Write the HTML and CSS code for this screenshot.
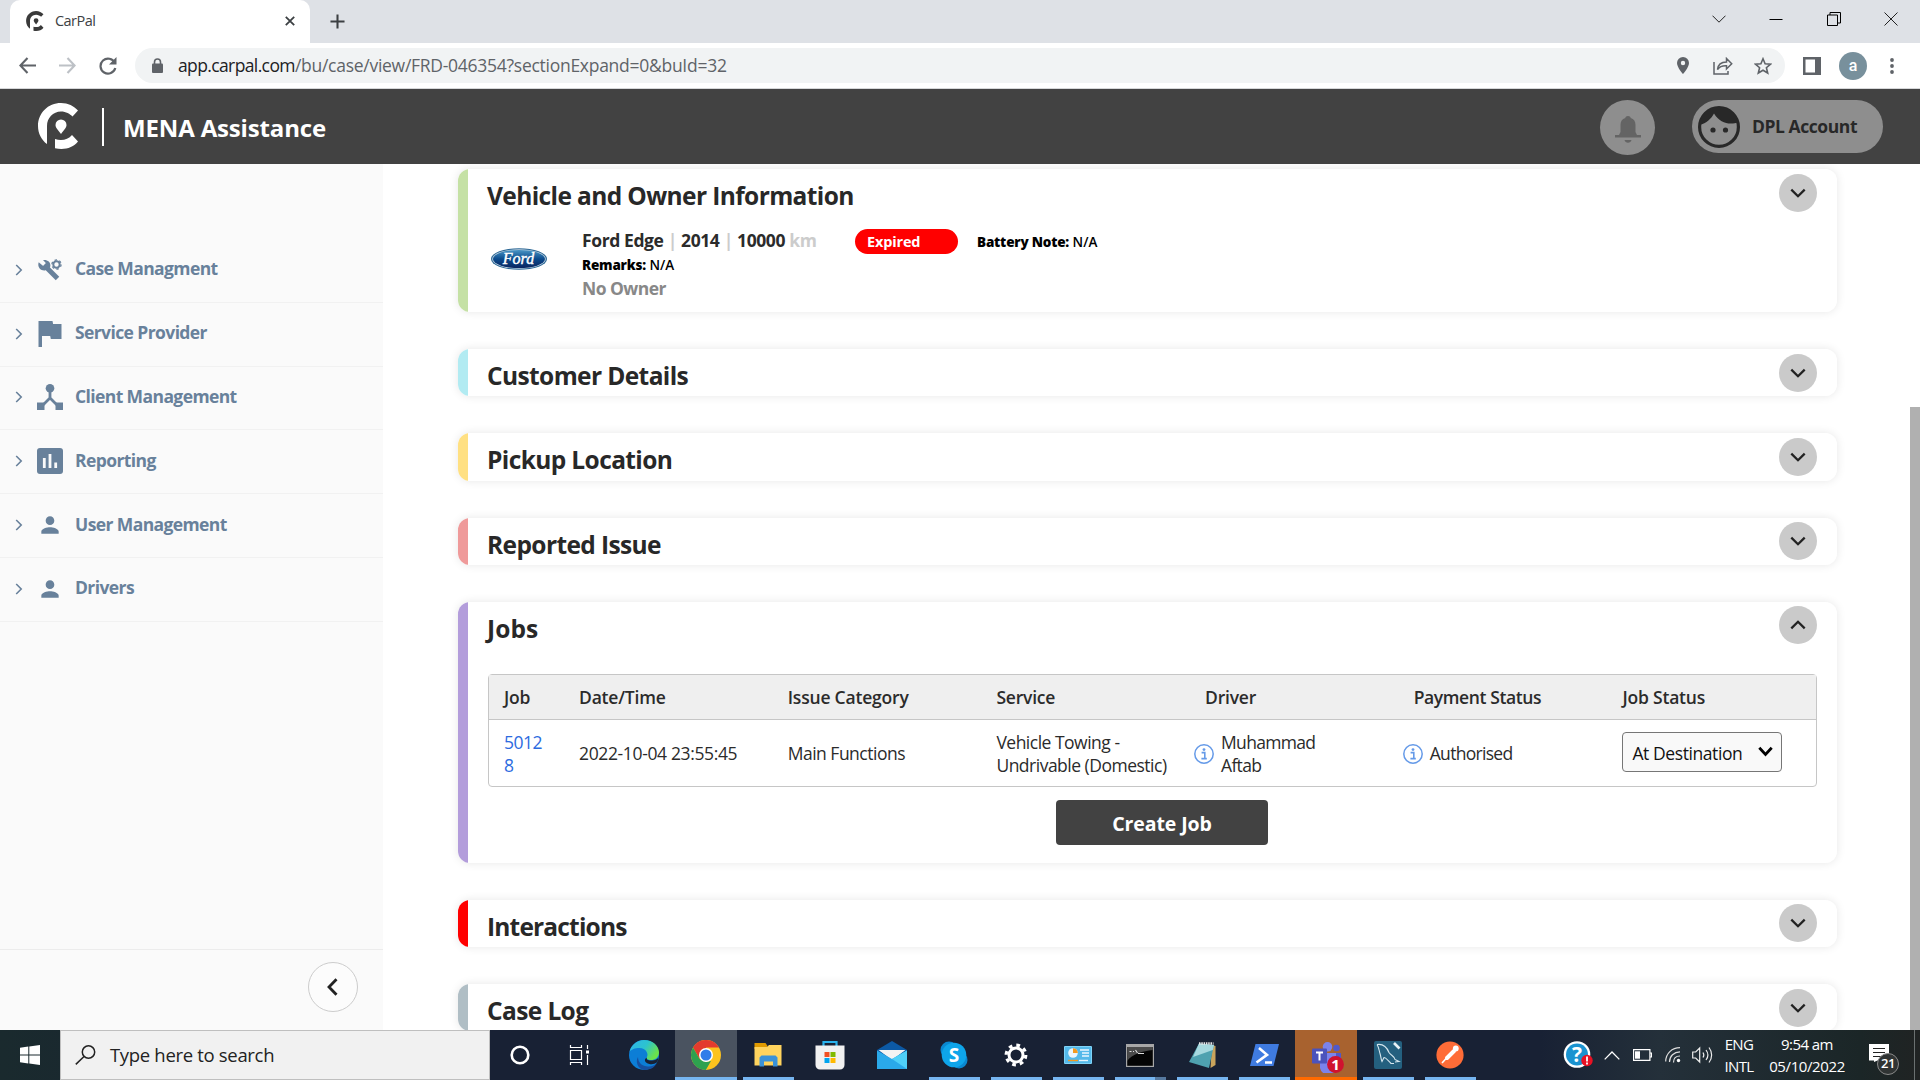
FILE: index.html
```html
<!DOCTYPE html>
<html lang="en">
<head>
<meta charset="utf-8">
<title>CarPal</title>
<link rel="stylesheet" href="styles.css">
</head>
<body>
<svg width="0" height="0" class="defs">
  <symbol id="chev-right" viewBox="0 0 8 12"><path d="M1.2 1l5 5-5 5" fill="none" stroke="currentColor" stroke-width="1.6"/></symbol>
  <symbol id="chev-down" viewBox="0 0 16 10"><path d="M1.3 1.6L8 8.2l6.700-6.600" fill="none" stroke="currentColor" stroke-width="2.300"/></symbol>
  <symbol id="person" viewBox="0 0 24 24"><path fill="currentColor" d="M12 12c2.210 0 4-1.790 4-4s-1.790-4-4-4-4 1.790-4 4 1.790 4 4 4zm0 2c-2.670 0-8 1.340-8 4v2h16v-2c0-2.660-5.330-4-8-4z"/></symbol>
  <symbol id="info" viewBox="0 0 20 20"><circle cx="10" cy="10" r="9.200" fill="none" stroke="currentColor" stroke-width="1.500"/><circle cx="10" cy="5.600" r="1.400" fill="currentColor"/><path d="M7.600 8.600h3.200v5.600M7.400 14.600h5.400" fill="none" stroke="currentColor" stroke-width="1.600"/></symbol>
  <symbol id="carpal" viewBox="0 0 41 46"><path fill="currentColor" d="M9 41C3.500 37 0 30.500 0 23 0 10 10 0 23 0c7 0 13 3 17 7.500l-5.500 6C32 11 28 8.500 23 8.500 15 8.500 9 15 9 23z"/><path fill="currentColor" d="M17 36c6 2.200 13 1 17-4l6 6.500C35 45 26 47.300 17 45.200z"/><path fill="currentColor" d="M23 31c-3-4-5.500-6.500-5.500-9a5.500 5.500 0 0 1 11 0c0 2.500-2.500 5-5.500 9z"/></symbol>
</svg>

<div class="tabstrip">
  <div class="tab">
    <svg class="tab-logo" viewBox="0 0 41 46"><use href="#carpal"/></svg>
    <span class="tab-title">CarPal</span>
    <svg class="tab-close" viewBox="0 0 10 10"><path d="M.8.8l8.400 8.400M9.200.8L.8 9.200" stroke="#3c4043" stroke-width="1.800"/></svg>
  </div>
  <svg class="newtab" viewBox="0 0 16 16"><path d="M8 .5v15M.5 8h15" stroke="#3c4043" stroke-width="2.200"/></svg>
  <div class="winctl">
    <svg width="14" height="8" viewBox="0 0 14 8"><path d="M.5.7L7 7.200 13.500.7" fill="none" stroke="#222"/></svg>
    <svg width="14" height="14" viewBox="0 0 14 14"><path d="M.5 7.500h13" stroke="#000"/></svg>
    <svg width="14" height="14" viewBox="0 0 14 14"><path d="M.5 3h10v10.500H.5zM3 3V.5h10.500V11h-3" fill="none" stroke="#000"/></svg>
    <svg width="14" height="14" viewBox="0 0 14 14"><path d="M.5.5l13 13M13.500.5l-13 13" stroke="#222"/></svg>
  </div>
</div>

<div class="toolbar">
  <svg class="nav-back" viewBox="0 0 16 16"><path d="M16 8H1.500M8 1L1.300 8 8 15" fill="none" stroke="#5f6368" stroke-width="2"/></svg>
  <svg class="nav-fwd" viewBox="0 0 16 16"><path d="M0 8h14.500M8 1l6.700 7L8 15" fill="none" stroke="#bdc1c6" stroke-width="2"/></svg>
  <svg class="nav-reload" viewBox="0 0 18 18"><path d="M15.800 5.800A7.500 7.500 0 1 0 16.300 11" fill="none" stroke="#5f6368" stroke-width="2.200"/><path d="M17.500 0v7.500H10z" fill="#5f6368"/></svg>
  <div class="omnibox">
    <svg class="lock" viewBox="0 0 11 15"><path d="M2.500 6V4a3 3 0 0 1 6 0v2" fill="none" stroke="#5f6368" stroke-width="1.600"/><rect y="5.500" width="11" height="9.500" rx="1" fill="#5f6368"/></svg>
    <span class="url"><b>app.carpal.com</b>/bu/case/view/FRD-046354?sectionExpand=0&amp;buId=32</span>
    <div class="omni-icons">
      <svg width="12" height="17" viewBox="0 0 12 17"><path fill="#5f6368" fill-rule="evenodd" d="M6 0a6 6 0 0 0-6 6c0 4.500 6 11 6 11s6-6.500 6-11a6 6 0 0 0-6-6zm0 3.800a2.200 2.200 0 1 1 0 4.400 2.200 2.200 0 0 1 0-4.400z"/></svg>
      <svg width="20" height="18" viewBox="0 0 20 18"><path d="M1 5v12h14v-3M4.500 12.500c.5-5 4-7.500 9-7.500V1.500L18.700 6.800l-5.200 5.200V8.700c-4-.2-7 .8-9 3.800z" fill="none" stroke="#5f6368" stroke-width="1.500"/></svg>
      <svg width="18" height="18" viewBox="0 0 18 18"><path d="M9 1.800l2.100 5 5.400.4-4.100 3.500 1.300 5.300L9 13.200 4.300 16l1.300-5.300L1.500 7.200l5.400-.4z" fill="none" stroke="#5f6368" stroke-width="1.600"/></svg>
    </div>
  </div>
  <svg class="panel" viewBox="0 0 18 18"><path fill="#5f6368" fill-rule="evenodd" d="M0 0h18v18H0zM2.500 2.500v13h9.500v-13z"/></svg>
  <div class="avatar">a</div>
  <svg class="menu" viewBox="0 0 4 16"><circle cx="2" cy="2" r="1.900" fill="#5f6368"/><circle cx="2" cy="8" r="1.900" fill="#5f6368"/><circle cx="2" cy="14" r="1.900" fill="#5f6368"/></svg>
</div>

<header class="header">
  <svg class="brand" viewBox="0 0 41 46"><use href="#carpal"/></svg>
  <div class="divider"></div>
  <div class="org">MENA Assistance</div>
  <div class="bell"><svg width="26" height="27" viewBox="0 0 26 27"><path fill="#646464" d="M13 0c-2 0-2.600 1-2.700 2C7 3 5.500 5.500 5.500 9v7L4 19H0v2.500h26V19h-4l-1.500-3V9c0-3.500-1.500-6-4.800-7C15.600 1 15 0 13 0zM9.500 24c.5 1.700 1.800 2.700 3.500 2.700s3-1 3.500-2.700z"/></svg></div>
  <div class="account">
    <svg width="42" height="42" viewBox="0 0 42 42"><circle cx="21" cy="21" r="19.400" fill="none" stroke="#282828" stroke-width="3.200"/><path fill="#282828" d="M1.500 19C2 9 11 1 21 1c9 0 17 6 19.500 15-8 3.500-18.500 1.500-24.500-8.500-2.500 5-7.500 9.700-14.500 11.500z"/><circle cx="15" cy="24" r="2.600" fill="#282828"/><circle cx="27.500" cy="24" r="2.600" fill="#282828"/></svg>
    <span>DPL Account</span>
  </div>
</header>

<div class="app">
  <aside class="sidebar">
    <nav class="nav">
      <a class="item"><svg class="chev"><use href="#chev-right"/></svg><span class="ico"><svg width="24" height="22" viewBox="0 0 24 22"><path d="M6 6l13.500 13.500" stroke="#68819b" stroke-width="5"/><path fill="#68819b" d="M.7 3.200C-.8 7.500 2 12 7 11.500L12 8.500C13.500 4 10.500.3 5 1l3 3.200L5.500 7.300z"/><circle cx="18.500" cy="5.500" r="3.200" fill="none" stroke="#68819b" stroke-width="2"/><circle cx="18.500" cy="5.500" r="4.600" fill="none" stroke="#68819b" stroke-width="1.300" stroke-dasharray="2.400 2.400"/></svg></span><span class="label">Case Managment</span></a>
      <a class="item"><svg class="chev"><use href="#chev-right"/></svg><span class="ico"><svg width="24" height="26" viewBox="0 0 24 26"><path fill="#68819b" d="M.5 0h14l.6 3h8.400v15H12.800l-.6-3H4v11H.5z"/></svg></span><span class="label">Service Provider</span></a>
      <a class="item"><svg class="chev"><use href="#chev-right"/></svg><span class="ico"><svg width="26" height="26" viewBox="0 0 26 26"><circle cx="13" cy="4.300" r="4.300" fill="#68819b"/><path d="M13 7v7L4 23M13 14l9 9" fill="none" stroke="#68819b" stroke-width="2.800"/><path fill="#68819b" d="M0 18.500h7.500V26H0zM18.500 18.500H26V26h-7.500z"/></svg></span><span class="label">Client Management</span></a>
      <a class="item"><svg class="chev"><use href="#chev-right"/></svg><span class="ico"><svg width="26" height="26" viewBox="0 0 26 26"><rect width="26" height="26" rx="3" fill="#68819b"/><path d="M7.300 10v10M13 6v14M18.700 14.500V20" stroke="#fafafa" stroke-width="2.800"/></svg></span><span class="label">Reporting</span></a>
      <a class="item"><svg class="chev"><use href="#chev-right"/></svg><span class="ico"><svg width="26" height="26"><use href="#person"/></svg></span><span class="label">User Management</span></a>
      <a class="item"><svg class="chev"><use href="#chev-right"/></svg><span class="ico"><svg width="26" height="26"><use href="#person"/></svg></span><span class="label">Drivers</span></a>
    </nav>
    <div class="sidefoot"><div class="collapse"><svg width="11" height="18" viewBox="0 0 11 18"><path d="M9.500 1.200L2 9l7.500 7.800" fill="none" stroke="#222" stroke-width="2.800"/></svg></div></div>
  </aside>

  <main class="content">
    <section class="card green">
      <div class="head"><h2>Vehicle and Owner Information</h2><button class="toggle"><svg><use href="#chev-down"/></svg></button></div>
      <div class="vehicle">
        <svg class="ford" viewBox="0 0 56 22">
          <defs><linearGradient id="fg" x1="0" y1="0" x2="0" y2="1"><stop offset="0" stop-color="#4b97c6"/><stop offset=".5" stop-color="#0b4a8c"/><stop offset="1" stop-color="#0a2560"/></linearGradient></defs>
          <ellipse cx="28" cy="11" rx="28" ry="10.800" fill="#2b6795"/><ellipse cx="28" cy="11" rx="26.800" ry="9.800" fill="#c3d4e2"/><ellipse cx="28" cy="11" rx="26" ry="9.100" fill="url(#fg)"/>
          <text x="27.500" y="16" text-anchor="middle" class="ford-text">Ford</text>
        </svg>
        <div class="vinfo">
          <div class="model">Ford Edge <i>|</i> 2014 <i>|</i> 10000 <i>km</i></div>
          <div class="small"><b>Remarks:</b> N/A</div>
          <div class="owner">No Owner</div>
        </div>
        <div class="pill">Expired</div>
        <div class="small battery"><b>Battery Note:</b> N/A</div>
      </div>
    </section>
    <section class="card cyan"><div class="head"><h2>Customer Details</h2><button class="toggle"><svg><use href="#chev-down"/></svg></button></div></section>
    <section class="card yellow"><div class="head"><h2>Pickup Location</h2><button class="toggle"><svg><use href="#chev-down"/></svg></button></div></section>
    <section class="card pink"><div class="head"><h2>Reported Issue</h2><button class="toggle"><svg><use href="#chev-down"/></svg></button></div></section>
    <section class="card purple">
      <div class="head"><h2 class="loose">Jobs</h2><button class="toggle up"><svg><use href="#chev-down"/></svg></button></div>
      <div class="jobs">
        <div class="row thead"><div>Job</div><div>Date/Time</div><div>Issue Category</div><div>Service</div><div>Driver</div><div class="tight">Payment Status</div><div>Job Status</div></div>
        <div class="row tbody">
          <div class="link">5012<br>8</div><div class="date">2022-10-04 23:55:45</div><div>Main Functions</div><div>Vehicle Towing -<br>Undrivable (Domestic)</div>
          <div class="withinfo"><svg><use href="#info"/></svg><span>Muhammad<br>Aftab</span></div>
          <div class="withinfo"><svg><use href="#info"/></svg><span>Authorised</span></div>
          <div><div class="select"><span>At Destination</span><svg width="15" height="11" viewBox="0 0 15 11"><path d="M1.300 1.800l6.200 6.600 6.200-6.600" fill="none" stroke="#000" stroke-width="2.800"/></svg></div></div>
        </div>
      </div>
      <button class="create">Create Job</button>
    </section>
    <section class="card red"><div class="head"><h2 class="narrow">Interactions</h2><button class="toggle"><svg><use href="#chev-down"/></svg></button></div></section>
    <section class="card slate"><div class="head"><h2>Case Log</h2><button class="toggle"><svg><use href="#chev-down"/></svg></button></div></section>
  </main>
  <div class="scroll"><div class="thumb"></div></div>
</div>

<footer class="taskbar">
  <div class="start"><svg width="20" height="20" viewBox="0 0 20 20"><path fill="#fff" d="M0 2.800L8.300 1.500v8H0zM9.300 1.400L20 0v9.500H9.300zM0 10.500h8.300v8L0 17.300zM9.300 10.500H20V20L9.300 18.600z"/></svg></div>
  <div class="search"><svg width="21" height="20" viewBox="0 0 21 20"><circle cx="13.500" cy="7" r="6.200" fill="none" stroke="#222" stroke-width="1.500"/><path d="M9 11.500L.8 19.400" stroke="#222" stroke-width="1.500"/></svg><span>Type here to search</span></div>
  <div class="cell cortana"><svg width="20" height="20" viewBox="0 0 20 20"><circle cx="10" cy="10" r="8.300" fill="none" stroke="#fff" stroke-width="2.600"/></svg></div>
  <div class="cell taskview"><svg width="21" height="20" viewBox="0 0 21 20"><path d="M1.500 5.500h11v9h-11zM1.500 0v2.500h11V0M1.500 20v-2.500h11V20M18.500 0v4M18.500 10v10" fill="none" stroke="#fff" stroke-width="1.200"/><path fill="#fff" d="M17 5.500h3v3h-3z"/></svg></div>
  <div class="cell"><svg width="30" height="30" viewBox="0 0 30 30"><defs><linearGradient id="eg" x1="0" y1="0" x2="1" y2=".5"><stop offset="0" stop-color="#2fb4ea"/><stop offset=".55" stop-color="#2cc3cf"/><stop offset="1" stop-color="#6be34a"/></linearGradient></defs><circle cx="15" cy="15" r="15" fill="#0c7ed6"/><path fill="url(#eg)" d="M.5 12C2 5 8 0 15 0c9 0 15 6 15 12.500 0 5-4 7.500-8 7.500-3 0-5-1-4.200-2.500C20 14 17 8 10.500 8 6 8 2 9.500.5 12z"/><path fill="#1650a0" d="M9 17c0 6 5 10 11 9.500 3 0 6-1.500 8-3.500-3 5-7 7-13 7-6-1-9-8-6-13z"/><path fill="#182134" d="M18 17.500c-1 1.800 1 3.300 5 3 3 0 5-1 6.500-3L28.500 22c-3 2-5 2.500-8 2-5-1-6-5-2.500-6.500z"/></svg></div>
  <div class="cell active"><svg width="30" height="30" viewBox="0 0 30 30"><circle cx="15" cy="15" r="15" fill="#fcc31e"/><path fill="#e33b2e" d="M2 7.500a15 15 0 0 1 26 0H15v7L8.500 18.700z"/><path fill="#2ea14f" d="M2 7.500l6.500 11.200L15 22l5-1-5.200 9A15 15 0 0 1 2 7.500z"/><circle cx="15" cy="15" r="7" fill="#fff"/><circle cx="15" cy="15" r="5.500" fill="#2f7de9"/></svg></div>
  <div class="cell run"><svg width="28" height="24" viewBox="0 0 28 24"><path fill="#e09a00" d="M.5 0h11l2 3v3H.5z"/><path fill="#ffd45e" d="M.5 4H13l2-2h12.500v20.500H.5z"/><path fill="#3a92d8" d="M5.500 23.500v-9l2-2h14l2 2v9h-4.500v-5h-9v5z"/></svg></div>
  <div class="cell"><svg width="30" height="30" viewBox="0 0 30 30"><path d="M8.500 7V2h13v5" fill="none" stroke="#2ab3ee" stroke-width="2.200"/><path fill="#f1f1f1" d="M.5 5.500h29V25a4.500 4.500 0 0 1-4.500 4.500H5A4.500 4.500 0 0 1 .5 25z"/><path fill="#f25022" d="M9.500 12h5v5h-5z"/><path fill="#7fba00" d="M15.500 12h5v5h-5z"/><path fill="#00a4ef" d="M9.500 18h5v5h-5z"/><path fill="#ffb900" d="M15.500 18h5v5h-5z"/></svg></div>
  <div class="cell"><svg width="30" height="28" viewBox="0 0 30 28"><path fill="#0c59a4" d="M15 0l15 9v9H0V9z"/><path fill="#f3f3f3" d="M1.500 9h27L15 19z"/><path fill="#2aa9ea" d="M0 9.500l15 8.500 15-8.500V28H0z"/><path fill="#4fd0f8" d="M30 9.500V28L15 18z"/></svg></div>
  <div class="cell run"><svg width="28" height="28" viewBox="0 0 28 28"><circle cx="9" cy="9" r="8.500" fill="#0a88d0"/><circle cx="19" cy="19" r="8.500" fill="#0a88d0"/><circle cx="14" cy="14" r="12.300" fill="#0ea5ea"/><text x="14" y="21" text-anchor="middle" class="skype">S</text></svg></div>
  <div class="cell run"><svg width="24" height="24" viewBox="0 0 24 24"><circle cx="12" cy="12" r="7" fill="none" stroke="#fff" stroke-width="3"/><circle cx="12" cy="12" r="9.800" fill="none" stroke="#fff" stroke-width="3.200" stroke-dasharray="3.700 4"/></svg></div>
  <div class="cell run"><svg width="28" height="18" viewBox="0 0 28 18"><rect width="28" height="18" rx="1" fill="#7fd3f7"/><rect x="1" y="1" width="26" height="16" fill="#54b9ea"/><circle cx="9" cy="7" r="4.800" fill="#eaf6fd"/><path fill="#f39a1f" d="M9 7V2.200A4.800 4.800 0 0 1 13.800 7z"/><path d="M16 4h9M18 7h7M18 10h7" stroke="#e7f6ff" stroke-width="1.600"/><path d="M4 14.500h10" stroke="#f39a1f" stroke-width="1.400"/><path d="M15 14.500h9" stroke="#e7f6ff" stroke-width="1.400"/></svg></div>
  <div class="cell run stacked"><svg width="28" height="23" viewBox="0 0 28 23"><rect width="28" height="23" fill="#a7a7a7"/><rect x="1.200" y="3" width="25.600" height="18.800" fill="#050505"/><path fill="#4b4b4b" d="M1.200 3h25.600v3C17 7 6 10 1.200 17z"/><path d="M3.500 7.500h2M7 7.500h1M9.500 6l2 3M12 9.500h6" stroke="#ddd" stroke-width="1.100"/></svg></div>
  <div class="cell run"><svg width="28" height="27" viewBox="0 0 28 27"><path fill="#c9a45c" d="M24 3l3.500 1v19l-5 3z"/><path fill="#4fa2b0" d="M11 1.500L26 3l-5 23L1 20z"/><path fill="#a6d9df" d="M11 1.500L26 3l-1.200 5L5 15z"/><path d="M11 1.500h14.500" stroke="#e8e8e8" stroke-width="2.500" stroke-dasharray="1.500 .8"/></svg></div>
  <div class="cell run"><svg width="29" height="22" viewBox="0 0 29 22"><path fill="#3f7be0" d="M5.500 0H29l-5.500 22H0z"/><path d="M9 4l8 6.800L6.500 18.500M15 18.500h7" fill="none" stroke="#fff" stroke-width="2.600"/></svg></div>
  <div class="cell alert"><svg width="32" height="31" viewBox="0 0 32 31"><circle cx="15.500" cy="4.800" r="4.800" fill="#7b83eb"/><circle cx="24.500" cy="6" r="3.300" fill="#5059c9"/><path fill="#5059c9" d="M18 11h11v9l-6 3z"/><path fill="#7b83eb" d="M8 11h16v12a8 8 0 0 1-16 3z"/><rect y="6.500" width="15" height="15" rx="1" fill="#4b53bc"/><path d="M4 10.500h7M7.500 10.500v8" stroke="#fff" stroke-width="2"/><circle cx="23.500" cy="22.500" r="8.400" fill="#d0122f"/><text x="23.500" y="28" text-anchor="middle" class="badge1">1</text></svg></div>
  <div class="cell run"><svg width="28" height="28" viewBox="0 0 28 28"><rect width="28" height="28" rx="2" fill="#24607f"/><path d="M3 3.500c6-1 10 3 12 8 2 3 6 4 6 7l4 2-4 .5M3 3.500c2 3 2 6 3 9s1 6 2 8l2-4c2 0 4 3 7 6h3" fill="none" stroke="#d5e6ee" stroke-width="1.100"/><path d="M20 2l5.500 5.500" stroke="#e8f1f5" stroke-width="2.600"/></svg></div>
  <div class="cell run"><svg width="28" height="28" viewBox="0 0 28 28"><circle cx="14" cy="14" r="13.600" fill="#ff6c37"/><path d="M6 22L16 11" stroke="#fff" stroke-width="1.600"/><path d="M11 17l7-7" stroke="#fff" stroke-width="4" stroke-linecap="round"/><circle cx="19.800" cy="7.500" r="2.900" fill="#fff"/></svg></div>
  <div class="tray">
    <svg class="help" viewBox="0 0 30 28"><circle cx="14" cy="13.500" r="13.300" fill="#fff"/><circle cx="14" cy="13.500" r="11" fill="#1a93d0"/><text x="14" y="21" text-anchor="middle" class="qmark">?</text><circle cx="24" cy="19.500" r="5.700" fill="#e81123"/><path d="M24 15.500v5M24 21.500v2" stroke="#fff" stroke-width="1.800"/></svg>
    <svg class="up-arrow" viewBox="0 0 16 9"><path d="M.7 8.400L8 1l7.300 7.400" fill="none" stroke="#fff" stroke-width="1.300"/></svg>
    <svg class="battery-ico" viewBox="0 0 19 12"><path d="M.6.6h16.300v10.800H.6zM17 4h1.500v4H17" fill="none" stroke="#fff" stroke-width="1.200"/><path fill="#fff" d="M2 2.300h5v7.400H2z"/></svg>
    <svg class="wifi" viewBox="0 0 16 16"><circle cx="13.500" cy="13.500" r="1.700" fill="#fff"/><path d="M.7 14.500C.7 6.500 7 .7 15 .7M4.500 15C4.500 9 9 5 15 4.800M8.500 15.500c0-4 2.500-6.500 6.500-6.500" fill="none" stroke="#ddd" stroke-width="1.200"/></svg>
    <svg class="sound" viewBox="0 0 21 18"><path d="M.7 6h3l4-4v14l-4-4h-3zM11 6.500c1 1.500 1 3.500 0 5M14 4c2.300 3 2.300 7 0 10M17 1.500c3.500 4.500 3.500 10.500 0 15" fill="none" stroke="#eee" stroke-width="1.200"/></svg>
    <div class="lang">ENG<br>INTL</div>
    <div class="clock"><span>9:54 am</span><br>05/10/2022</div>
    <div class="notif"><svg width="21" height="18" viewBox="0 0 21 18"><path fill="#fff" d="M0 0h20v16.500H8.500L5 18v-1.500H0z"/><path d="M4 4.500h12M4 8.500h12M4 12.500h8" stroke="#222" stroke-width="1.200"/></svg><span class="count">21</span></div>
    <div class="peek"></div>
  </div>
</footer>
</body>
</html>
```
FILE: styles.css
```css
* { box-sizing: border-box; }
body { margin: 0; width: 1920px; height: 1080px; overflow: hidden; display: flex; flex-direction: column; background: #fff; color: #2b2b2b; font-family: "Open Sans", "Noto Sans", sans-serif; }
svg { flex: none; display: block; }
.defs { position: absolute; }
button { border: 0; padding: 0; font-family: inherit; }

/* browser chrome */
.tabstrip { height: 43px; background: #dee1e6; display: flex; align-items: center; }
.tab { width: 300px; height: 43px; margin-left: 10px; background: #fff; border-radius: 10px 10px 0 0; display: flex; align-items: center; padding: 0 15px 1px 16px; }
.tab-logo { width: 18px; height: 20px; color: #3a3a3a; }
.tab-title { flex: 1; margin: -1px 0 0 11px; font-size: 14.5px; letter-spacing: -.55px; color: #3c4043; }
.tab-close { width: 10px; height: 10px; }
.newtab { width: 15px; height: 15px; margin-left: 20px; }
.winctl { margin: -6px 22px 0 auto; display: flex; align-items: center; gap: 43.500px; }
.toolbar { height: 46px; background: #fff; border-bottom: 1px solid #d6d7d9; display: flex; align-items: center; }
.nav-back { width: 17px; height: 17px; margin-left: 19px; }
.nav-fwd { width: 17px; height: 17px; margin-left: 23px; }
.nav-reload { width: 18px; height: 18px; margin-left: 23px; }
.omnibox { width: 1650px; height: 35px; margin-left: 18px; border-radius: 18px; background: #f1f3f4; display: flex; align-items: center; padding: 0 13px 0 17px; }
.lock { width: 11px; height: 15px; }
.url { margin: -1px 0 0 15px; font-size: 17.500px; letter-spacing: -.27px; color: #5f6368; white-space: nowrap; }
.url b { font-weight: 400; color: #202124; letter-spacing: -.62px; }
.omni-icons { margin-left: auto; display: flex; align-items: center; gap: 24px; }
.omni-icons svg:last-child { margin-left: -3px; }
.panel { width: 18px; height: 18px; margin-left: 18px; }
.avatar { width: 28px; height: 28px; border-radius: 50%; margin-left: 18px; background: #78909c; color: #fff; font: 500 16px/27px Roboto, sans-serif; text-align: center; }
.menu { width: 4px; height: 16px; margin-left: 23px; }

/* application header */
.header { height: 75px; background: #424242; display: flex; align-items: center; }
.brand { width: 41px; height: 46px; margin: 0 0 1px 38px; color: #fff; }
.divider { width: 2px; height: 38px; margin-left: 23px; background: #fff; }
.org { margin: 2px 0 0 19px; color: #fff; font-size: 24px; font-weight: 700; letter-spacing: -.15px; }
.bell { width: 55px; height: 55px; margin: 2px 37px 0 auto; border-radius: 50%; background: #8e8e8e; display: flex; align-items: center; justify-content: center; padding-top: 4px; }
.account { width: 191px; height: 53px; margin-right: 37px; border-radius: 27px; background: #8e8e8e; display: flex; align-items: center; padding-left: 6px; font-size: 17.500px; font-weight: 700; letter-spacing: -.44px; color: #282828; }
.account span { margin: -1px 0 0 12px; }

.app { flex: 1; min-height: 0; display: flex; }
.sidebar { width: 383px; background: #fafafa; display: flex; flex-direction: column; }
.nav { padding-top: 75px; flex: 1; }
.item { height: 63.800px; border-bottom: 1px solid #f1f1f1; display: flex; align-items: center; font-size: 17.500px; font-weight: 700; letter-spacing: -.6px; color: #68819b; padding-bottom: 3px; }
.label { margin-top: -1px; }
.chev { width: 8px; height: 12px; margin: 2px 0 0 15px; }
.ico { width: 26px; height: 26px; margin: 2px 12px 0 14px; display: flex; align-items: center; justify-content: center; }
.sidefoot { height: 81px; border-top: 1px solid #ececec; display: flex; justify-content: flex-end; padding: 12px 25px 0 0; }
.collapse { width: 50px; height: 50px; border: 1px solid #ccc; border-radius: 50%; background: #fcfcfc; display: flex; align-items: center; justify-content: center; padding-right: 1px; }

.content { width: 1527px; padding: 5px 73px 0 75px; overflow: hidden; display: flex; flex-direction: column; gap: 37px; }
.card { --accent: #ccc; flex: none; height: 47.250px; border-radius: 12px; background: linear-gradient(90deg, var(--accent) 10px, #fff 10px); box-shadow: 0 0 10px rgba(0,0,0,.1); padding: 0 20px 0 30px; }
.green { height: 143px; --accent: #c5e1a5; }
.cyan { --accent: #b2ebf2; }
.yellow { --accent: #ffe082; }
.pink { --accent: #ef9a9a; }
.purple { height: 261px; --accent: #b39ddb; }
.red { --accent: #f00; }
.slate { --accent: #b0bec5; }
.head { display: flex; justify-content: space-between; height: 47px; }
h2 { margin: 10px 0 0 -1px; font-size: 24.500px; line-height: 34px; font-weight: 700; letter-spacing: -.61px; color: #282828; }
h2.loose { letter-spacing: .1px; }
h2.narrow { letter-spacing: -.82px; }
.toggle { width: 38px; height: 38px; margin-top: 4.500px; border-radius: 50%; background: #cacaca; color: #222; display: flex; align-items: center; justify-content: center; }
.toggle svg { width: 16px; height: 10px; }
.up svg { transform: scaleY(-1); }

.vehicle { display: flex; padding-left: 3px; margin-top: 12px; }
.ford { width: 56px; height: 22px; margin-top: 20px; }
.ford-text { font: italic 400 16px "Liberation Serif", serif; fill: #fff; stroke: #fff; stroke-width: .4px; }
.vinfo { width: 273px; margin-left: 35px; }
.model { font-size: 17.500px; line-height: 25px; font-weight: 700; letter-spacing: -.4px; color: #2b2b2b; white-space: nowrap; }
.model i { font-style: normal; color: #ccc; }
.small { font-size: 13.500px; line-height: 24px; font-weight: 600; color: #000; white-space: nowrap; }
.small b { font-weight: 800; letter-spacing: -.2px; }
.owner { font-size: 17.500px; line-height: 23px; font-weight: 700; letter-spacing: -.55px; color: #888; }
.pill { width: 103px; height: 25px; margin-top: 1px; border-radius: 13px; background: #f00; color: #fff; font-size: 14.500px; line-height: 25px; font-weight: 700; letter-spacing: -.15px; padding-left: 12px; }
.battery { margin: 2px 0 0 19px; }

.jobs { margin-top: 25px; border: 1px solid #c6c6c6; border-radius: 4px; font-size: 17.500px; letter-spacing: -.5px; }
.row { display: grid; grid-template-columns: 90px repeat(6, 208.700px); align-items: center; width: 1327px; overflow: hidden; }
.row > div:first-child { padding-left: 15px; }
.thead { height: 45px; background: #efefef; border-bottom: 1px solid #c6c6c6; padding-top: 1px; font-weight: 600; letter-spacing: -.2px; }
.thead .tight { letter-spacing: -.4px; }
.tbody { height: 66px; line-height: 23px; padding-top: 2px; }
.date { letter-spacing: -.36px; }
.link { color: #2d6be0; }
.row > .withinfo { display: flex; align-items: center; margin-left: -11px; }
.withinfo svg { width: 20px; height: 20px; margin-right: 7px; color: #659ae8; }
.withinfo span { letter-spacing: -.7px; }
.select { width: 160px; height: 40px; margin-top: -3px; border: 1px solid #767676; border-radius: 4px; background: #f9f9f9; color: #111; letter-spacing: -.42px; display: flex; align-items: center; justify-content: space-between; padding: 2px 8px 0 9px; }
.select svg { margin-bottom: 4px; }
.create { display: block; width: 212px; height: 45px; margin: 13px 0 0 568px; border-radius: 4px; background: #424242; color: #fff; font-size: 19.500px; font-weight: 700; letter-spacing: -.1px; line-height: 45px; padding-top: 1px; }

.scroll { width: 10px; padding-top: 243px; }
.thumb { height: 100%; background: #b0b0b0; }

/* taskbar */
.taskbar { height: 50px; display: flex; background: linear-gradient(90deg, #1a2a2e 0, #182134 490px, #182134 1540px, #24303a 1660px, #1b2627 1860px, #202323 1920px); }
.start { width: 60px; display: flex; align-items: center; justify-content: center; }
.search { width: 430px; background: #f1f1f1; border: 1px solid #bfbfbf; display: flex; align-items: center; padding-left: 14px; font-size: 18.500px; letter-spacing: -.32px; color: #222; }
.search span { margin: -1px 0 0 14px; }
.cell { width: 62px; display: flex; align-items: center; justify-content: center; }
.cortana { width: 60px; }
.taskview { width: 58px; margin-right: 5px; }
.active { background: #4a5360; border-bottom: 3px solid #76b5f0; padding-top: 3px; }
.run { background: linear-gradient(#76b5f0, #76b5f0) center bottom / 51px 3px no-repeat; }
.stacked { background: linear-gradient(90deg, #76b5f0 40px, #56799f 40px) center bottom / 51px 3px no-repeat; }
.alert { background: #a8622f; border-bottom: 3px solid #ff6a00; padding: 7px 0 0 4px; }
.skype { font: 700 19px "Open Sans", sans-serif; fill: #fff; }
.badge1 { font: 700 15px "Open Sans", sans-serif; fill: #fff; }
.qmark { font: 700 21px "Open Sans", sans-serif; fill: #fff; }
.tray { flex: 1; display: flex; align-items: center; color: #fff; font-size: 15px; line-height: 22px; text-align: center; }
.help { width: 30px; height: 28px; margin-left: 82px; }
.up-arrow { width: 16px; height: 9px; margin-left: 11px; }
.battery-ico { width: 19px; height: 12px; margin-left: 13px; }
.wifi { width: 16px; height: 16px; margin-left: 13px; }
.sound { width: 21px; height: 18px; margin-left: 11px; }
.lang { width: 34px; margin: -1px 0 0 9px; letter-spacing: -.6px; }
.clock { width: 80px; margin: -1px 0 0 11px; letter-spacing: -.4px; white-space: nowrap; }
.clock span { letter-spacing: -.55px; }
.notif { position: relative; width: 21px; height: 18px; margin: 0 0 4px 22px; }
.count { position: absolute; left: 8px; top: 9px; width: 22px; height: 22px; border: 1px solid #8a8a8a; border-radius: 50%; background: #303434; font-size: 13px; line-height: 19px; font-weight: 600; letter-spacing: -.5px; }
.peek { width: 1px; height: 50px; margin-left: 24px; background: #6a7070; }
```
